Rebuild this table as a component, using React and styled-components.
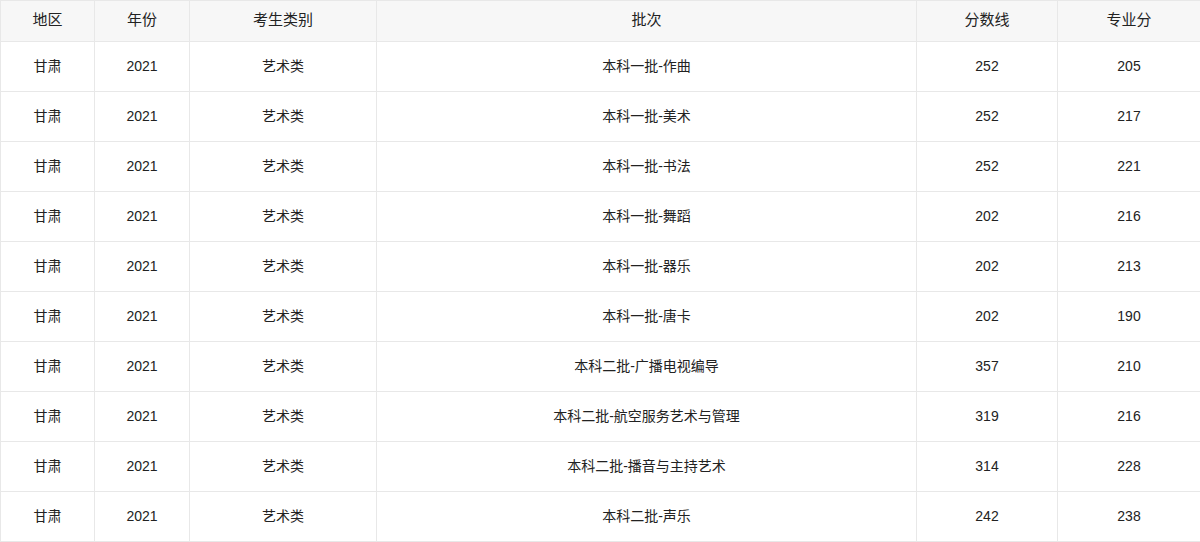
import React from "react";
import styled, { createGlobalStyle } from "styled-components";

const Global = createGlobalStyle`
  html, body { margin: 0; padding: 0; background: #fff; }
  body { font-family: "Liberation Sans", "Noto Sans CJK SC", sans-serif; color: #222; }
`;

const Table = styled.table`
  width: 1200px;
  table-layout: fixed;
  border-collapse: collapse;
  font-size: 14px;
`;

const Th = styled.th`
  box-sizing: border-box;
  height: 41px;
  padding: 0 0 3px;
  background: #f7f7f7;
  border: 1px solid #e8e8e8;
  font-weight: normal;
  font-size: 15px;
  line-height: 20px;
  color: #222;
  text-align: center;
  vertical-align: middle;
`;

const Td = styled.td`
  box-sizing: border-box;
  height: 50px;
  padding: 0 0 2px;
  border: 1px solid #e8e8e8;
  line-height: 20px;
  text-align: center;
  vertical-align: middle;
  color: #222;
`;

const widths = [94, 95, 187, 540, 141, 143];
const headers = ["地区", "年份", "考生类别", "批次", "分数线", "专业分"];
const rows = [
  ["本科一批-作曲", 252, 205],
  ["本科一批-美术", 252, 217],
  ["本科一批-书法", 252, 221],
  ["本科一批-舞蹈", 202, 216],
  ["本科一批-器乐", 202, 213],
  ["本科一批-唐卡", 202, 190],
  ["本科二批-广播电视编导", 357, 210],
  ["本科二批-航空服务艺术与管理", 319, 216],
  ["本科二批-播音与主持艺术", 314, 228],
  ["本科二批-声乐", 242, 238],
];

export default function App() {
  return (
    <>
      <Global />
      <Table>
        <colgroup>
          {widths.map((w, i) => (
            <col key={i} style={{ width: w }} />
          ))}
        </colgroup>
        <thead>
          <tr>
            {headers.map((h) => (
              <Th key={h}>{h}</Th>
            ))}
          </tr>
        </thead>
        <tbody>
          {rows.map((r, i) => (
            <tr key={i}>
              <Td>甘肃</Td>
              <Td>2021</Td>
              <Td>艺术类</Td>
              <Td>{r[0]}</Td>
              <Td>{r[1]}</Td>
              <Td>{r[2]}</Td>
            </tr>
          ))}
        </tbody>
      </Table>
    </>
  );
}
